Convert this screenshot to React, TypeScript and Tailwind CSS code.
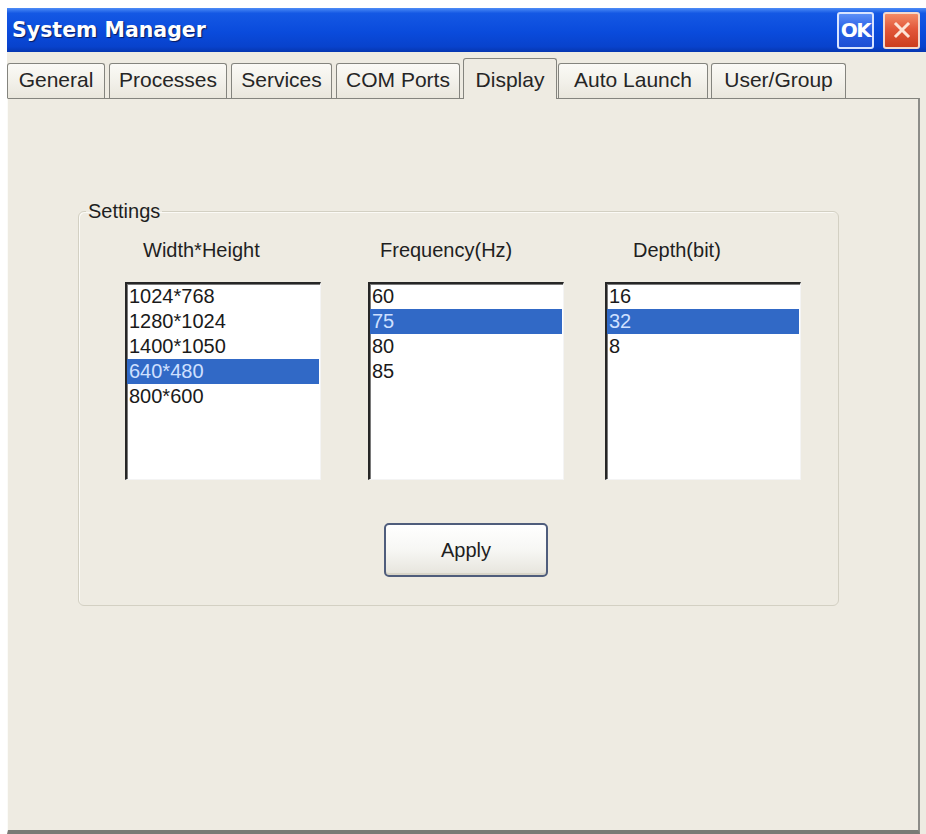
import React from 'react';

type Tab = { label: string; cls: string; active?: boolean };

const tabs: Tab[] = [
  { label: 'General', cls: 'w-[98px]' },
  { label: 'Processes', cls: 'w-[118px] ml-[4px]' },
  { label: 'Services', cls: 'w-[101px] ml-[4px]' },
  { label: 'COM Ports', cls: 'w-[124px] ml-[4px]' },
  { label: 'Display', cls: 'w-[94px] ml-[3px]', active: true },
  { label: 'Auto Launch', cls: 'w-[150px] ml-[1px]' },
  { label: 'User/Group', cls: 'w-[135px] ml-[3px]' },
];

type Column = { title: string; titleCls: string; colCls: string; items: string[]; selected: number };

const columns: Column[] = [
  { title: 'Width*Height', titleCls: 'pl-[18px]', colCls: 'ml-[46px]', items: ['1024*768', '1280*1024', '1400*1050', '640*480', '800*600'], selected: 3 },
  { title: 'Frequency(Hz)', titleCls: 'pl-[12px]', colCls: 'ml-[47px]', items: ['60', '75', '80', '85'], selected: 1 },
  { title: 'Depth(bit)', titleCls: 'pl-[28px]', colCls: 'ml-[41px]', items: ['16', '32', '8'], selected: 1 },
];

const ListBox: React.FC<{ items: string[]; selected: number }> = ({ items, selected }) => (
  <div className="w-[196px] h-[198px] bg-white border-t-[2px] border-l-[2px] border-[#262626] border-r border-b border-r-[#f4f4f4] border-b-[#f4f4f4] shadow-[inset_1px_1px_0_#7a7a7a]">
    {items.map((it, i) => (
      <div
        key={it}
        className={
          i === selected
            ? 'h-[25px] leading-[25px] pl-[2px] mr-[1px] bg-[#3169c6] text-[#cfe0ff]'
            : 'h-[25px] leading-[25px] pl-[2px] text-[#1a1a1a]'
        }
      >
        {it}
      </div>
    ))}
  </div>
);

export default function App() {
  return (
    <div className="w-[926px] h-[834px] bg-white pt-[8px] pl-[7px] font-['Liberation_Sans',Arial,sans-serif] overflow-hidden">
      <div className="w-[919px] h-[826px] flex flex-col bg-[#eeebe2]">
        {/* title bar */}
        <div className="h-[44px] shrink-0 flex items-center justify-between pl-[5px] pr-[6px] bg-[linear-gradient(180deg,#4d8cf6_0%,#1458e4_12%,#0a4bdc_55%,#0842cc_88%,#0636b0_100%)]">
          <span className="font-['DejaVu_Sans',sans-serif] font-bold text-[20.5px] leading-[24px] text-white [text-shadow:1px_1px_1px_#0a1a5c]">
            System Manager
          </span>
          <div className="flex items-center gap-[9px]">
            <div className="w-[37px] h-[37px] rounded-[3px] border-[2px] border-[#d9e4ff] bg-[linear-gradient(180deg,#5c8ff7_0%,#2a60e6_45%,#1d4fd4_100%)] flex items-center justify-center">
              <span className="font-['DejaVu_Sans',sans-serif] font-bold text-[20px] leading-none text-white tracking-[-1.5px]">OK</span>
            </div>
            <div className="w-[37px] h-[37px] rounded-[3px] border-[2px] border-[#f4d8cc] bg-[linear-gradient(180deg,#f28a66_0%,#e2583a_45%,#cc3d1e_100%)] flex items-center justify-center">
              <svg width="20" height="20" viewBox="0 0 20 20">
                <path d="M4 4 L16 16 M16 4 L4 16" stroke="#fde4d6" strokeWidth="3" strokeLinecap="square" />
              </svg>
            </div>
          </div>
        </div>

        {/* tab strip */}
        <div className="mt-[6px] flex items-end text-[21px] text-[#262626]">
          {tabs.map((t) =>
            t.active ? (
              <div
                key={t.label}
                className={`${t.cls} relative z-10 -mb-[1px] h-[41px] pt-[9px] text-center leading-[24px] bg-[#eeebe2] border border-b-0 border-[#84847e] rounded-t-[3px]`}
              >
                {t.label}
              </div>
            ) : (
              <div
                key={t.label}
                className={`${t.cls} h-[35px] pt-[4px] text-center leading-[24px] bg-[linear-gradient(180deg,#fbfaf6_0%,#f1efe8_60%,#e9e6dc_100%)] border border-b-0 border-[#84847e] rounded-t-[3px]`}
              >
                {t.label}
              </div>
            )
          )}
        </div>

        {/* panel */}
        <div className="flex-1 mr-[6px] border-t border-t-[#84847e] border-l border-l-[#fbfbf8] border-r-[2px] border-r-[#8c8c88] border-b-[4px] border-b-[#7a7a76] bg-[#eeebe2]">
          <fieldset className="ml-[70px] mt-[102px] w-[761px] border border-[#d3d0c3] rounded-[6px] shadow-[inset_1px_1px_0_#fbfaf6]">
            <legend className="ml-[7px] px-[2px] text-[20px] leading-[20px] text-[#1f1f1f]">Settings</legend>
            <div className="pt-[17px] flex">
              {columns.map((c) => (
                <div key={c.title} className={`${c.colCls} flex flex-col`}>
                  <div className={`${c.titleCls} text-[20px] leading-[24px] text-[#1f1f1f]`}>{c.title}</div>
                  <div className="mt-[20px] text-[20px]">
                    <ListBox items={c.items} selected={c.selected} />
                  </div>
                </div>
              ))}
            </div>
            <div className="pl-[305px] pt-[43px] pb-[28px]">
              <button className="w-[164px] h-[54px] rounded-[5px] border-[2px] border-[#4f5d7c] bg-[linear-gradient(180deg,#ffffff_0%,#f7f7f4_50%,#e6e4dc_100%)] shadow-[inset_0_-2px_0_#d8d5c8] text-[20px] text-[#1f1f1f]">
                Apply
              </button>
            </div>
          </fieldset>
        </div>
      </div>
    </div>
  );
}
